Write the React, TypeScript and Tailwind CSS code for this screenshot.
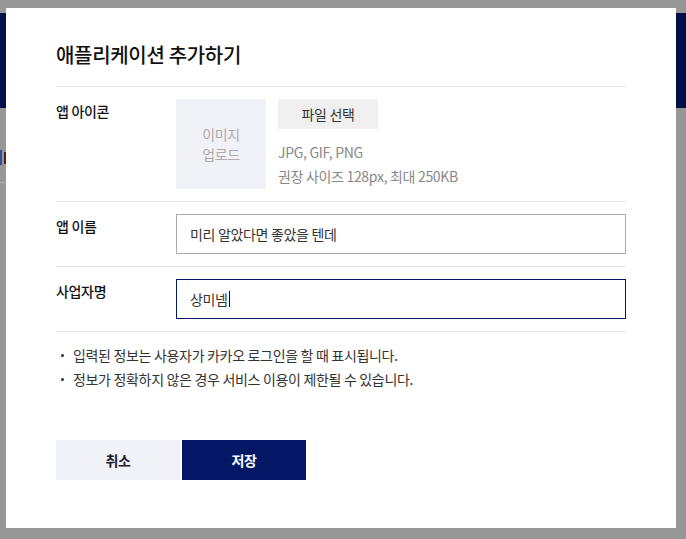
import React from "react";

export default function App() {
  return (
    <div className="relative w-[686px] h-[539px] overflow-hidden bg-[#979797] font-['Noto_Sans_CJK_KR','Noto_Sans',sans-serif]">
      {/* dimmed page behind the modal */}
      <div className="pt-[13px]">
        <div className="h-[95px] bg-[#01104a]" />
        <div className="mt-[42px] flex items-start gap-[2px]">
          <div className="w-[2px] h-[15px] bg-[#2d4f9a]" />
          <div className="w-[2px] h-[12px] mt-[2px] bg-[#5a1a1a]" />
        </div>
        <div className="mt-[17px] w-[6px] h-px bg-[#b5b5b5]" />
      </div>

      {/* modal */}
      <div className="absolute left-[6px] top-[8px] w-[670px] h-[520px] bg-white px-[50px] text-[#111] tracking-[-0.02em]">
        <h2 className="pt-[32px] pb-[16px] text-[20px] leading-[30px] font-medium">
          애플리케이션 추가하기
        </h2>

        {/* app icon row */}
        <div className="flex border-t border-[#e6e6e6] py-[12px]">
          <div className="w-[120px] pt-[2px] text-[14px] leading-[20px] font-medium">
            앱 아이콘
          </div>
          <div className="flex">
            <div className="w-[90px] h-[90px] bg-[#f1f2f7] flex items-center justify-center text-center text-[14px] leading-[20px] text-[#ababab]">
              이미지
              <br />
              업로드
            </div>
            <div className="ml-[12px] flex flex-col">
              <button className="w-[100px] h-[30px] bg-[#f0f0f0] text-[14px] text-[#333]">
                파일 선택
              </button>
              <div className="mt-[11px] text-[14px] leading-[24px] text-[#888]">
                <div>JPG, GIF, PNG</div>
                <div>권장 사이즈 128px, 최대 250KB</div>
              </div>
            </div>
          </div>
        </div>

        {/* app name row */}
        <div className="flex border-t border-[#e6e6e6] py-[12px]">
          <div className="w-[120px] pt-[2px] text-[14px] leading-[20px] font-medium">
            앱 이름
          </div>
          <div className="flex-1 h-[40px] border border-[#aaaaaa] flex items-center pl-[13px] text-[14px] text-[#333]">
            미리 알았다면 좋았을 텐데
          </div>
        </div>

        {/* business name row */}
        <div className="flex border-t border-[#e6e6e6] py-[12px]">
          <div className="w-[120px] pt-[2px] text-[14px] leading-[20px] font-medium">
            사업자명
          </div>
          <div className="flex-1 h-[40px] border border-[#061768] flex items-center pl-[13px] text-[14px] text-[#333]">
            상미넴
            <span className="ml-[1px] w-px h-[16px] bg-[#111]" />
          </div>
        </div>

        {/* notes */}
        <div className="border-t border-[#e6e6e6] pt-[11px] text-[14px] leading-[24px] text-[#333]">
          <div className="flex items-center">
            <span className="ml-[5px] mr-[9px] w-[3px] h-[3px] rounded-full bg-[#333]" />
            입력된 정보는 사용자가 카카오 로그인을 할 때 표시됩니다.
          </div>
          <div className="flex items-center">
            <span className="ml-[5px] mr-[9px] w-[3px] h-[3px] rounded-full bg-[#333]" />
            정보가 정확하지 않은 경우 서비스 이용이 제한될 수 있습니다.
          </div>
        </div>

        {/* buttons */}
        <div className="mt-[49px] flex gap-[2px]">
          <button className="w-[124px] h-[40px] bg-[#f1f2f7] text-[14px] font-bold text-[#1e2233]">
            취소
          </button>
          <button className="w-[124px] h-[40px] bg-[#041766] text-[14px] font-bold text-white">
            저장
          </button>
        </div>
      </div>
    </div>
  );
}
